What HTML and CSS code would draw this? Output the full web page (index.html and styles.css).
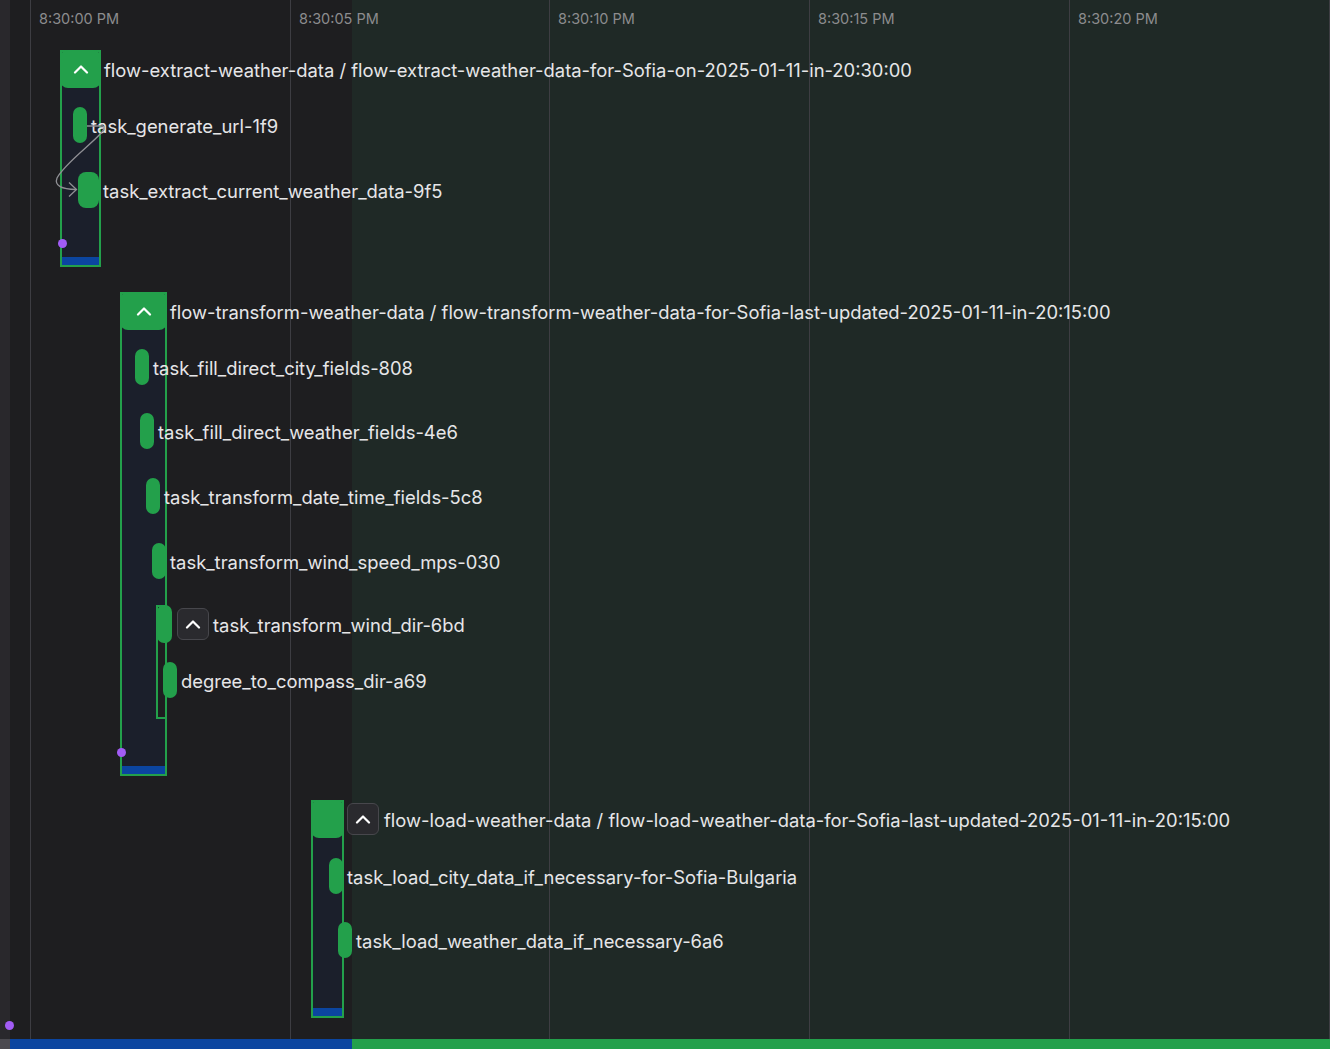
FILE: index.html
```html
<!DOCTYPE html>
<html>
<head>
<meta charset="utf-8">
<link rel="stylesheet" href="styles.css">
</head>
<body>
<div class="timeline">
  <div class="col col-gutter"><div class="fill"></div><div class="strip"></div></div>
  <div class="col col-past"><div class="fill"></div><div class="strip"></div></div>
  <div class="col col-future"><div class="fill"></div><div class="strip"></div></div>

  <div class="tick" style="left:30px"><span>8:30:00 PM</span></div>
  <div class="tick" style="left:290px"><span>8:30:05 PM</span></div>
  <div class="tick" style="left:549px"><span>8:30:10 PM</span></div>
  <div class="tick" style="left:809px"><span>8:30:15 PM</span></div>
  <div class="tick" style="left:1069px"><span>8:30:20 PM</span></div>
  <div class="tick" style="left:1329px"></div>

  <!-- Flow 1 -->
  <div class="flow" style="left:60px;top:50px;width:41px;height:217px">
    <div class="flow-head"><svg class="chev" viewBox="0 0 16 10"><path d="M2 8.5 L8 2.5 L14 8.5"/></svg></div>
    <div class="flow-end"></div>
    <div class="dot" style="left:-4.5px;bottom:17.5px"></div>
  </div>
  <div class="flow-title" style="left:104px;top:51px">flow-extract-weather-data / flow-extract-weather-data-for-Sofia-on-2025-01-11-in-20:30:00</div>
  <div class="task" style="left:73px;top:107px"><div class="pill"></div><span>task_generate_url-1f9</span></div>
  <div class="task" style="left:78px;top:172px"><div class="pill wide"></div><span>task_extract_current_weather_data-9f5</span></div>

  <!-- Flow 2 -->
  <div class="flow" style="left:120px;top:292px;width:47px;height:484px">
    <div class="flow-head"><svg class="chev" viewBox="0 0 16 10"><path d="M2 8.5 L8 2.5 L14 8.5"/></svg></div>
    <div class="flow-end"></div>
    <div class="dot" style="left:-5.5px;bottom:17.5px"></div>
  </div>
  <div class="flow-title" style="left:170px;top:293px">flow-transform-weather-data / flow-transform-weather-data-for-Sofia-last-updated-2025-01-11-in-20:15:00</div>
  <div class="task" style="left:135px;top:349px"><div class="pill"></div><span>task_fill_direct_city_fields-808</span></div>
  <div class="task" style="left:140px;top:413px"><div class="pill"></div><span>task_fill_direct_weather_fields-4e6</span></div>
  <div class="task" style="left:146px;top:478px"><div class="pill"></div><span>task_transform_date_time_fields-5c8</span></div>
  <div class="task" style="left:152px;top:543px"><div class="pill"></div><span>task_transform_wind_speed_mps-030</span></div>
  <div class="subflow" style="left:156px;top:605px;width:11px;height:114px"></div>
  <div class="task" style="left:157px;top:605px"><div class="pill sub"></div><button class="toggle"><svg class="chev" viewBox="0 0 16 10"><path d="M2 8.5 L8 2.5 L14 8.5"/></svg></button><span>task_transform_wind_dir-6bd</span></div>
  <div class="task" style="left:163px;top:662px"><div class="pill"></div><span>degree_to_compass_dir-a69</span></div>

  <!-- Flow 3 -->
  <div class="flow" style="left:311px;top:800px;width:33px;height:218px">
    <div class="flow-head"></div>
    <div class="flow-end"></div>
  </div>
  <div class="flow-title" style="left:347px;top:800px"><button class="toggle"><svg class="chev" viewBox="0 0 16 10"><path d="M2 8.5 L8 2.5 L14 8.5"/></svg></button><span class="txt">flow-load-weather-data / flow-load-weather-data-for-Sofia-last-updated-2025-01-11-in-20:15:00</span></div>
  <div class="task" style="left:329px;top:858px"><div class="pill"></div><span>task_load_city_data_if_necessary-for-Sofia-Bulgaria</span></div>
  <div class="task" style="left:338px;top:922px"><div class="pill"></div><span>task_load_weather_data_if_necessary-6a6</span></div>

  <div class="dot" style="left:5px;top:1021px"></div>

  <svg class="edges" viewBox="0 0 1330 1049">
    <path d="M87 126 L103 126 C112 130 66 160 57 178 C54 186 62 189 76 189.5"/>
    <path d="M69 182.5 L76.5 189.5 L69 196.5"/>
  </svg>
</div>
</body>
</html>
```
FILE: styles.css
```css
* { box-sizing: border-box; }
html, body { margin: 0; padding: 0; background: #1e1e20; }
body { font-family: Inter, "Noto Sans", "Liberation Sans", sans-serif; color: #e6e6e8; }

.timeline {
  position: relative;
  width: 1330px;
  height: 1049px;
  display: flex;
  overflow: hidden;
}
.col { display: flex; flex-direction: column; }
.col .fill { flex: 1; }
.col .strip { height: 10px; }
.col-gutter { width: 10px; }
.col-gutter .fill { background: #29282c; }
.col-gutter .strip { background: #4b4a50; }
.col-past { width: 342px; }
.col-past .fill { background: #1e1e20; }
.col-past .strip { background: #0b45a0; }
.col-future { flex: 1; }
.col-future .fill { background: #1f2926; }
.col-future .strip { background: #23a04b; }

.tick {
  position: absolute;
  top: 0;
  bottom: 10px;
  width: 1px;
  background: #3d3d42;
}
.tick span {
  position: absolute;
  left: 9px;
  top: 10px;
  font-size: 14.5px;
  line-height: 17px;
  color: #8c8c8e;
  white-space: nowrap;
}

.flow {
  position: absolute;
  border: 2px solid #23a04b;
  background: #1b1f2b;
}
.flow-head {
  position: absolute;
  left: -2px;
  right: -2px;
  top: -2px;
  height: 38px;
  background: #23a04b;
  border-radius: 8px;
  display: flex;
  align-items: center;
  justify-content: center;
}
.flow-end {
  position: absolute;
  left: 0;
  right: 0;
  bottom: 0;
  height: 8px;
  background: #0b45a0;
}
.chev {
  width: 16px;
  height: 10px;
  fill: none;
  stroke: #ffffff;
  stroke-width: 2.2;
  stroke-linecap: round;
  stroke-linejoin: round;
}
.dot {
  position: absolute;
  width: 9px;
  height: 9px;
  border-radius: 50%;
  background: #a25cf5;
}

.flow-title {
  position: absolute;
  height: 38px;
  display: flex;
  align-items: center;
  gap: 5px;
  font-size: 18.4px;
  white-space: nowrap;
  color: #e6e6e8;
}
.flow-title .txt { padding-top: 1px; }

.task {
  position: absolute;
  display: flex;
  align-items: center;
  gap: 4px;
  font-size: 18.4px;
  white-space: nowrap;
  color: #e6e6e8;
}
.task span { padding-top: 1px; }
.pill {
  width: 14px;
  height: 36px;
  border-radius: 7px;
  background: #23a04b;
  flex: none;
}
.pill.wide { width: 21px; border-radius: 8px; }
.pill.sub { width: 15px; height: 38px; margin-right: 1px; }

.subflow {
  position: absolute;
  border: 2px solid #23a04b;
  background: #1e1e20;
}

.toggle {
  width: 32px;
  height: 32px;
  padding: 0;
  border: 1px solid #47474c;
  border-radius: 6px;
  background: #2a2a2e;
  display: flex;
  align-items: center;
  justify-content: center;
  flex: none;
}

.edges {
  position: absolute;
  left: 0;
  top: 0;
  width: 1330px;
  height: 1049px;
  fill: none;
  stroke: #8f8f94;
  stroke-width: 1.3;
  pointer-events: none;
}
```
